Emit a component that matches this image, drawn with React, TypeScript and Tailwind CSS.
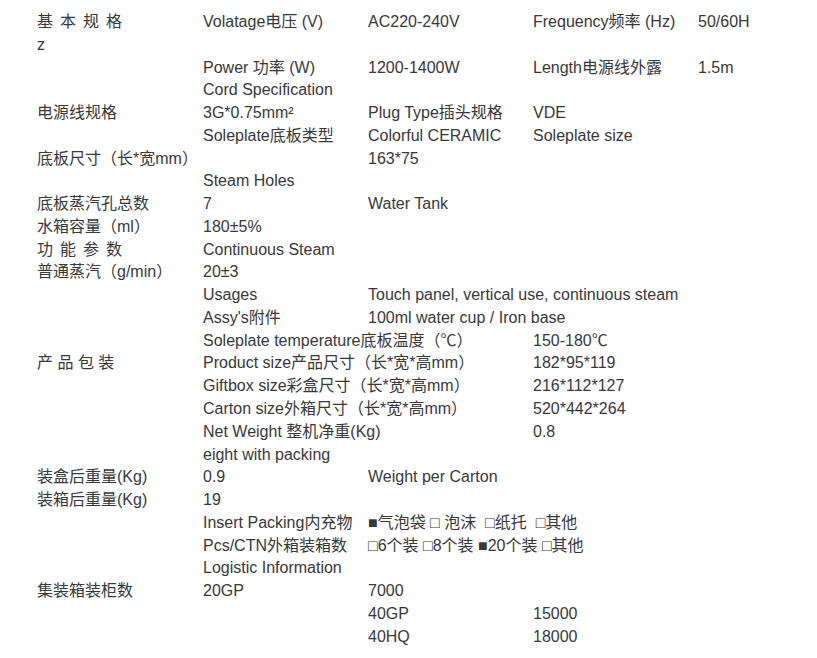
import * as React from "react";

type Cell = { col: number; span?: number; text: string; wide?: boolean };

const rows: Cell[][] = [
  [
    { col: 1, text: "基本规格", wide: true },
    { col: 2, text: "Volatage电压 (V)" },
    { col: 3, text: "AC220-240V" },
    { col: 4, text: "Frequency频率 (Hz)" },
    { col: 5, text: "50/60H" },
  ],
  [{ col: 1, text: "z" }],
  [
    { col: 2, text: "Power 功率 (W)" },
    { col: 3, text: "1200-1400W" },
    { col: 4, text: "Length电源线外露" },
    { col: 5, text: "1.5m" },
  ],
  [{ col: 2, text: "Cord Specification" }],
  [
    { col: 1, text: "电源线规格" },
    { col: 2, text: "3G*0.75mm²" },
    { col: 3, text: "Plug Type插头规格" },
    { col: 4, text: "VDE" },
  ],
  [
    { col: 2, text: "Soleplate底板类型" },
    { col: 3, text: "Colorful CERAMIC" },
    { col: 4, text: "Soleplate size" },
  ],
  [
    { col: 1, text: "底板尺寸（长*宽mm）" },
    { col: 3, text: "163*75" },
  ],
  [{ col: 2, text: "Steam Holes" }],
  [
    { col: 1, text: "底板蒸汽孔总数" },
    { col: 2, text: "7" },
    { col: 3, text: "Water Tank" },
  ],
  [
    { col: 1, text: "水箱容量（ml）" },
    { col: 2, text: "180±5%" },
  ],
  [
    { col: 1, text: "功能参数", wide: true },
    { col: 2, text: "Continuous Steam" },
  ],
  [
    { col: 1, text: "普通蒸汽（g/min）" },
    { col: 2, text: "20±3" },
  ],
  [
    { col: 2, text: "Usages" },
    { col: 3, span: 3, text: "Touch panel, vertical use, continuous steam" },
  ],
  [
    { col: 2, text: "Assy's附件" },
    { col: 3, span: 2, text: "100ml water cup / Iron base" },
  ],
  [
    { col: 2, span: 2, text: "Soleplate temperature底板温度（℃）" },
    { col: 4, text: "150-180℃" },
  ],
  [
    { col: 1, text: "产 品 包 装" },
    { col: 2, span: 2, text: "Product size产品尺寸（长*宽*高mm）" },
    { col: 4, text: "182*95*119" },
  ],
  [
    { col: 2, span: 2, text: "Giftbox size彩盒尺寸（长*宽*高mm）" },
    { col: 4, text: "216*112*127" },
  ],
  [
    { col: 2, span: 2, text: "Carton size外箱尺寸（长*宽*高mm）" },
    { col: 4, text: "520*442*264" },
  ],
  [
    { col: 2, span: 2, text: "Net Weight 整机净重(Kg)" },
    { col: 4, text: "0.8" },
  ],
  [{ col: 2, text: "eight with packing" }],
  [
    { col: 1, text: "装盒后重量(Kg)" },
    { col: 2, text: "0.9" },
    { col: 3, text: "Weight per Carton" },
  ],
  [
    { col: 1, text: "装箱后重量(Kg)" },
    { col: 2, text: "19" },
  ],
  [
    { col: 2, text: "Insert Packing内充物" },
    { col: 3, span: 2, text: "■气泡袋 □ 泡沫  □纸托  □其他" },
  ],
  [
    { col: 2, text: "Pcs/CTN外箱装箱数" },
    { col: 3, span: 2, text: "□6个装 □8个装 ■20个装 □其他" },
  ],
  [{ col: 2, text: "Logistic Information" }],
  [
    { col: 1, text: "集装箱装柜数" },
    { col: 2, text: "20GP" },
    { col: 3, text: "7000" },
  ],
  [
    { col: 3, text: "40GP" },
    { col: 4, text: "15000" },
  ],
  [
    { col: 3, text: "40HQ" },
    { col: 4, text: "18000" },
  ],
];

const colStart: Record<number, string> = {
  1: "col-start-1",
  2: "col-start-2",
  3: "col-start-3",
  4: "col-start-4",
  5: "col-start-5",
};

const colSpan: Record<number, string> = {
  1: "col-span-1",
  2: "col-span-2",
  3: "col-span-3",
};

export default function App() {
  return (
    <main
      className="min-h-screen bg-white text-[16px] text-[#383838] pt-[11px] pl-[37px]"
      style={{ fontFamily: '"Liberation Sans", Arial, "Noto Sans CJK SC", sans-serif' }}
    >
      {rows.map((row, i) => (
        <div key={i} className="grid grid-cols-[166px_165px_165px_165px_1fr] h-[22.78px] leading-[22.78px]">
          {row.map((c, j) => (
            <div
              key={j}
              className={`${colStart[c.col]} ${colSpan[c.span ?? 1]} whitespace-pre ${c.wide ? "tracking-[7px]" : ""}`}
            >
              {c.text}
            </div>
          ))}
        </div>
      ))}
    </main>
  );
}
